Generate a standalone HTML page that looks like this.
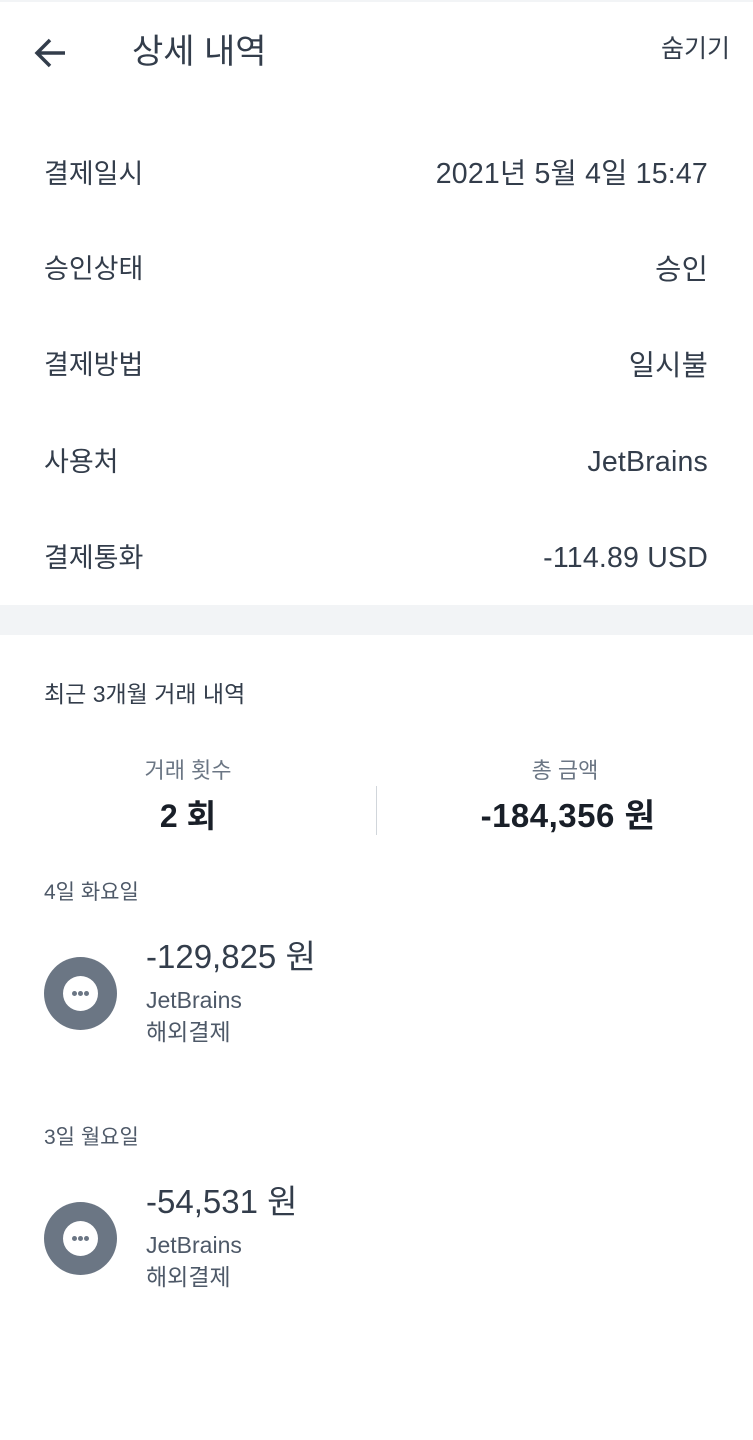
<!DOCTYPE html>
<html><head><meta charset="utf-8"><style>
*{margin:0;padding:0;box-sizing:border-box}
body{width:753px;height:1440px;background:#fff;position:relative;overflow:hidden;font-family:"Liberation Sans","Noto Sans CJK KR",sans-serif;color:#191f28}
.a{position:absolute;white-space:nowrap;line-height:1}
.r{right:45px;text-align:right}
.row{font-size:27px;color:#333d4b}
.rv{font-size:28.5px;letter-spacing:0.2px}
.g{color:#6b7684}
.ic{position:absolute;left:44px;width:73px;height:73px;border-radius:50%;background:#6b7684}
.ic::before{content:"";position:absolute;left:19px;top:19px;width:35px;height:35px;border-radius:50%;background:#fff}
.ic i{position:absolute;top:34px;width:5px;height:5px;border-radius:50%;background:#6b7684}
</style></head><body>
<div style="position:absolute;left:0;top:0;width:753px;height:2px;background:#f2f4f6"></div>
<svg style="position:absolute;left:34px;top:37px" width="34" height="32" viewBox="0 0 34 32"><path d="M31 16H4M16 3L3 16l13 13" stroke="#333d4b" stroke-width="3.5" fill="none"/></svg>
<div class="a" style="left:132px;top:35px;font-size:34px;color:#333d4b">상세 내역</div>
<div class="a r" style="right:23px;top:37px;font-size:25px;color:#333d4b">숨기기</div>

<div class="a row" style="left:44px;top:161px">결제일시</div><div class="a row r rv" style="top:160px">2021년 5월 4일 15:47</div>
<div class="a row" style="left:44px;top:256px">승인상태</div><div class="a row r rv" style="top:256px">승인</div>
<div class="a row" style="left:44px;top:352px">결제방법</div><div class="a row r rv" style="top:352px">일시불</div>
<div class="a row" style="left:44px;top:449px">사용처</div><div class="a row r rv" style="top:448px">JetBrains</div>
<div class="a row" style="left:44px;top:545px">결제통화</div><div class="a row r rv" style="top:544px">-114.89 USD</div>

<div style="position:absolute;left:0;top:605px;width:753px;height:30px;background:#f2f4f6"></div>
<div class="a" style="left:44px;top:683px;font-size:23px;color:#333d4b">최근 3개월 거래 내역</div>
<div class="a g" style="left:0;width:376px;text-align:center;top:760px;font-size:22px">거래 횟수</div>
<div class="a" style="left:0;width:376px;text-align:center;top:800px;font-size:32px;font-weight:bold">2 회</div>
<div style="position:absolute;left:376px;top:786px;width:1px;height:49px;background:#d1d6db"></div>
<div class="a g" style="left:377px;width:376px;text-align:center;top:760px;font-size:22px">총 금액</div>
<div class="a" style="left:380px;width:376px;text-align:center;top:799px;font-size:33px;font-weight:bold;letter-spacing:0.5px">-184,356 원</div>

<div class="a g" style="left:44px;top:882px;font-size:21px;color:#4e5968">4일 화요일</div>
<div class="a" style="left:146px;top:940px;font-size:33px;color:#333d4b">-129,825 원</div>
<div class="ic" style="top:957px"><i style="left:28px"></i><i style="left:34px"></i><i style="left:40px"></i></div>
<div class="a g" style="left:146px;top:989px;font-size:23px;color:#4e5968">JetBrains</div>
<div class="a g" style="left:146px;top:1021px;font-size:23px;color:#4e5968">해외결제</div>

<div class="a g" style="left:44px;top:1127px;font-size:21px;color:#4e5968">3일 월요일</div>
<div class="a" style="left:146px;top:1185px;font-size:33px;color:#333d4b">-54,531 원</div>
<div class="ic" style="top:1202px"><i style="left:28px"></i><i style="left:34px"></i><i style="left:40px"></i></div>
<div class="a g" style="left:146px;top:1234px;font-size:23px;color:#4e5968">JetBrains</div>
<div class="a g" style="left:146px;top:1266px;font-size:23px;color:#4e5968">해외결제</div>
</body></html>
